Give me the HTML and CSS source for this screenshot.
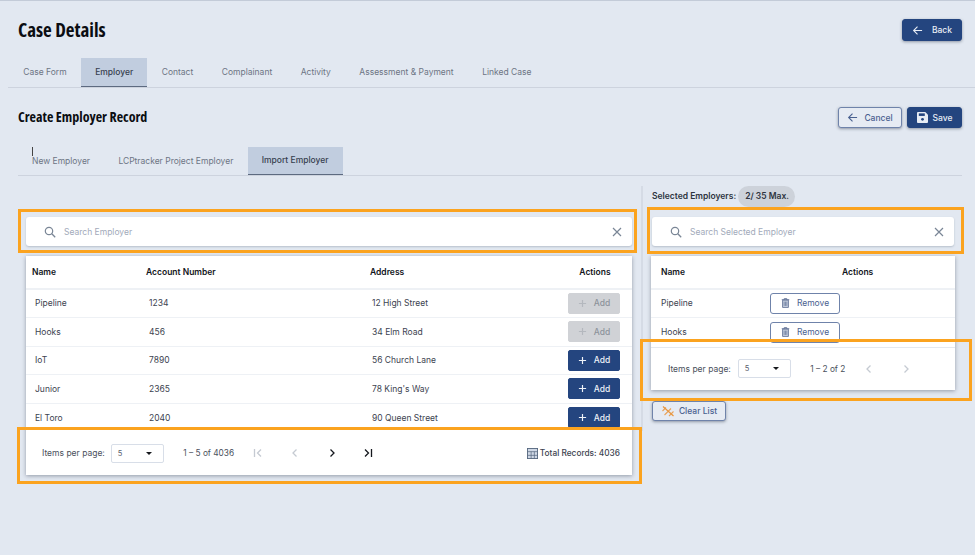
FILE: index.html
```html
<!DOCTYPE html>
<html lang="en">
<head>
<meta charset="utf-8">
<title>Case Details</title>
<link rel="stylesheet" href="styles.css">
</head>
<body>
<svg class="defs" width="0" height="0" aria-hidden="true">
  <symbol id="i-back" viewBox="0 0 12 12"><path d="M11 6H2M6 1.800 1.800 6 6 10.200" fill="none" stroke="currentColor" stroke-width="1.200"/></symbol>
  <symbol id="i-plus" viewBox="0 0 10 10"><path d="M5 1v8M1 5h8" fill="none" stroke="currentColor" stroke-width="1.300"/></symbol>
  <symbol id="i-search" viewBox="0 0 12 12"><circle cx="5" cy="5" r="3.700" fill="none" stroke="currentColor" stroke-width="1.200"/><path d="m7.800 7.800 3.400 3.400" stroke="currentColor" stroke-width="1.300"/></symbol>
  <symbol id="i-x" viewBox="0 0 10 10"><path d="m1 1 8 8M9 1 1 9" fill="none" stroke="currentColor" stroke-width="1.200"/></symbol>
  <symbol id="i-trash" viewBox="0 0 10 12"><path d="M.5 2h9M3.500 2V.7h3V2" fill="none" stroke="currentColor"/><path d="M1.500 2.600h7V11.300h-7z" fill="#c9d1e0" stroke="currentColor"/><path d="M3.400 4.300v5.200M5 4.300v5.200M6.600 4.300v5.200" stroke="currentColor" stroke-width=".8"/></symbol>
  <symbol id="i-prev" viewBox="0 0 8 10"><path d="M5.500 1.500 2 5l3.500 3.500" fill="none" stroke="currentColor" stroke-width="1.300"/></symbol>
  <symbol id="i-next" viewBox="0 0 8 10"><path d="M2.500 1.500 6 5 2.500 8.500" fill="none" stroke="currentColor" stroke-width="1.300"/></symbol>
  <symbol id="i-first" viewBox="0 0 10 10"><path d="M1.500 1v8M8 1.500 4.500 5 8 8.500" fill="none" stroke="currentColor" stroke-width="1.300"/></symbol>
  <symbol id="i-last" viewBox="0 0 10 10"><path d="M8.500 1v8M2 1.500 5.500 5 2 8.500" fill="none" stroke="currentColor" stroke-width="1.300"/></symbol>
</svg>

<header class="page-head">
  <h1 class="title">Case Details</h1>
  <button class="btn btn-solid btn-back"><svg class="ic-back"><use href="#i-back"/></svg>Back</button>
</header>

<nav class="tabs main-tabs">
  <a class="tab">Case Form</a>
  <a class="tab active">Employer</a>
  <a class="tab">Contact</a>
  <a class="tab">Complainant</a>
  <a class="tab">Activity</a>
  <a class="tab">Assessment &amp; Payment</a>
  <a class="tab">Linked Case</a>
</nav>

<section class="record-head">
  <h2 class="subtitle">Create Employer Record</h2>
  <div class="head-actions">
    <button class="btn btn-outline btn-cancel"><svg class="ic-back"><use href="#i-back"/></svg>Cancel</button>
    <button class="btn btn-solid btn-save">
      <svg class="ic-save" viewBox="0 0 12 12"><path d="M1 0h8l3 3v8a1 1 0 0 1-1 1H1a1 1 0 0 1-1-1V1a1 1 0 0 1 1-1z" fill="currentColor"/><rect x="2" y="1.500" width="6.500" height="2.800" fill="#24457f"/><circle cx="6" cy="8" r="1.500" fill="#24457f"/></svg>Save</button>
  </div>
</section>

<nav class="tabs sub-tabs">
  <span class="caret"></span>
  <a class="tab">New Employer</a>
  <a class="tab">LCPtracker Project Employer</a>
  <a class="tab active">Import Employer</a>
</nav>

<main class="columns">
  <section class="col-left">
    <div class="search">
      <svg class="ic-search"><use href="#i-search"/></svg>
      <span class="placeholder">Search Employer</span>
      <svg class="ic-x"><use href="#i-x"/></svg>
    </div>
    <div class="card">
      <div class="row row-l row-head"><span>Name</span><span>Account Number</span><span>Address</span><span class="act">Actions</span></div>
      <div class="row row-l"><span>Pipeline</span><span>1234</span><span>12 High Street</span><button class="btn-add off"><svg class="ic-plus"><use href="#i-plus"/></svg>Add</button></div>
      <div class="row row-l"><span>Hooks</span><span>456</span><span>34 Elm Road</span><button class="btn-add off"><svg class="ic-plus"><use href="#i-plus"/></svg>Add</button></div>
      <div class="row row-l"><span>IoT</span><span>7890</span><span>56 Church Lane</span><button class="btn-add"><svg class="ic-plus"><use href="#i-plus"/></svg>Add</button></div>
      <div class="row row-l"><span>Junior</span><span>2365</span><span>78 King's Way</span><button class="btn-add"><svg class="ic-plus"><use href="#i-plus"/></svg>Add</button></div>
      <div class="row row-l last"><span>El Toro</span><span>2040</span><span>90 Queen Street</span><button class="btn-add"><svg class="ic-plus"><use href="#i-plus"/></svg>Add</button></div>
      <div class="pager pager-l">
        <span class="pp-label">Items per page:</span>
        <span class="select"><span>5</span><i class="tri"></i></span>
        <span class="range">1 – 5 of 4036</span>
        <span class="nav-set">
          <svg class="pg dim"><use href="#i-first"/></svg>
          <svg class="pg dim"><use href="#i-prev"/></svg>
          <svg class="pg"><use href="#i-next"/></svg>
          <svg class="pg"><use href="#i-last"/></svg>
        </span>
        <span class="total">
          <svg class="ic-grid" viewBox="0 0 12 12"><rect x=".5" y=".5" width="11" height="11" fill="#cfd8e6" stroke="#56677f"/><path d="M.5 4h11M.5 8h11M4.500 4v7.500M8 4v7.500" stroke="#56677f" stroke-width=".8"/></svg>Total Records: 4036</span>
      </div>
    </div>
  </section>

  <aside class="col-right">
    <div class="sel-head"><span>Selected Employers:</span><span class="chip">2/ 35 Max.</span></div>
    <div class="search search-r">
      <svg class="ic-search"><use href="#i-search"/></svg>
      <span class="placeholder">Search Selected Employer</span>
      <svg class="ic-x"><use href="#i-x"/></svg>
    </div>
    <div class="card">
      <div class="row row-r row-head"><span>Name</span><span class="act-r">Actions</span></div>
      <div class="row row-r"><span>Pipeline</span><button class="btn-remove"><svg class="ic-trash"><use href="#i-trash"/></svg>Remove</button></div>
      <div class="row row-r last"><span>Hooks</span><button class="btn-remove"><svg class="ic-trash"><use href="#i-trash"/></svg>Remove</button></div>
      <div class="pager pager-r">
        <span class="pp-label">Items per page:</span>
        <span class="select"><span>5</span><i class="tri"></i></span>
        <span class="range">1 – 2 of 2</span>
        <span class="nav-set">
          <svg class="pg dim"><use href="#i-prev"/></svg>
          <svg class="pg dim"><use href="#i-next"/></svg>
        </span>
      </div>
    </div>
    <button class="btn btn-outline btn-clear">
      <svg class="ic-clear" viewBox="0 0 14 12"><path d="M1.500 6 5 2.500M3.500 10 10 3.500M8 11l4.500-4.500" stroke="#e8a25a" stroke-width="1.100" fill="none"/><path d="m2 1.500 10.500 9.500" stroke="#e8963e" stroke-width="1.200"/></svg>Clear List</button>
  </aside>
</main>

<div class="mark mark-a"></div>
<div class="mark mark-b"></div>
<div class="mark mark-c"></div>
<div class="mark mark-d"></div>
</body>
</html>
```
FILE: styles.css
```css
* { box-sizing: border-box; }
html, body { margin: 0; padding: 0; }
body {
  position: relative;
  width: 975px;
  height: 555px;
  overflow: hidden;
  background: #e2e8f1;
  border-top: 1px solid #c3cbd8;
  font-family: "Inter", "Liberation Sans", sans-serif;
  font-size: 8.5px;
  color: #3c4350;
}
.defs { position: absolute; }
svg { display: block; flex: none; }
button { font-family: inherit; cursor: pointer; }

.page-head {
  display: flex;
  align-items: center;
  justify-content: space-between;
  height: 57px;
  padding: 1px 13px 0 18px;
}
.title {
  margin: 0;
  font-family: "Open Sans", "Noto Sans", sans-serif;
  font-stretch: 75%;
  font-size: 19px;
  font-weight: 700;
  color: #0b0d12;
}
.btn {
  display: flex;
  align-items: center;
  justify-content: center;
  border-radius: 3px;
  font-size: 8.5px;
  font-weight: 500;
  box-shadow: 0 1px 3px rgba(40, 50, 70, .45);
}
.btn-solid { background: #24457f; border: 1px solid #24457f; color: #e8edf5; }
.btn-outline { background: #e6ebf3; border: 1px solid #6f83aa; color: #4a6190; }
.btn-back { width: 60px; height: 22px; gap: 9px; }
.ic-back { width: 11px; height: 11px; }

.tabs { display: flex; border-bottom: 1px solid #cdd3de; color: #6d7584; font-size: 8.5px; }
.tab { display: flex; align-items: center; height: 100%; padding-bottom: 1px; }
.tab.active {
  background: #c1cddf;
  border-bottom: 1px solid #5d6a80;
  color: #37404f;
  font-weight: 500;
}
.main-tabs { height: 30px; margin-left: 8px; padding-left: 1px; }
.main-tabs .tab { padding: 0 14.25px 1px; }
.record-head {
  display: flex;
  align-items: center;
  justify-content: space-between;
  height: 59px;
  padding: 0 13px 0 18px;
}
.subtitle {
  margin: 0 0 3px;
  font-family: "Open Sans", "Noto Sans", sans-serif;
  font-stretch: 75%;
  font-size: 14px;
  font-weight: 700;
  color: #0b0d12;
}
.head-actions { display: flex; gap: 5px; }
.btn-cancel { width: 64px; height: 21px; gap: 6px; }
.btn-save { width: 55px; height: 21px; gap: 5px; }
.ic-save { width: 11px; height: 11px; }

.sub-tabs { position: relative; height: 29px; margin: 0 13px 0 18px; }
.sub-tabs .tab { padding: 0 14.3px 1px 14px; }
.caret { position: absolute; left: 14px; top: 0; width: 1px; height: 9px; background: #444; }

.columns { display: flex; }
.col-left { width: 606px; margin: 41px 0 0 26px; }
.col-right {
  width: 314px;
  height: 245px;
  margin: 10px 0 0 9px;
  padding-left: 8px;
  border-left: 2px solid #d5dbe5;
}
.search {
  display: flex;
  align-items: center;
  height: 29px;
  padding: 0 10px 0 18px;
  background: #fff;
  border-radius: 3px;
  box-shadow: 0 1px 2px rgba(60, 75, 100, .25);
  margin-bottom: 10px;
}
.ic-search { width: 12px; height: 12px; color: #7a8696; margin-right: 8px; }
.placeholder { flex: 1; color: #a2aaba; font-size: 8.5px; }
.ic-x { width: 10px; height: 10px; color: #7a8696; }

.card {
  background: #fff;
  box-shadow: 0 1px 4px rgba(50, 60, 80, .45);
}
.row {
  display: grid;
  align-items: center;
  height: 28.5px;
  border-bottom: 1px solid #eef1f5;
  padding-left: 9px;
  color: #3c4350;
}
.row-l { grid-template-columns: 114px 223px 196px 52px; }
.row-r { grid-template-columns: 109px 70px; padding-left: 10px; }
.row-head {
  height: 33.5px;
  padding-left: 6px;
  border-bottom-width: 2px;
  font-weight: 600;
  color: #12151b;
}
.row-l.row-head { grid-template-columns: 114px 224px 196px 58px; }
.row-r.row-head { grid-template-columns: 181px 70px; padding-left: 10px; }
.row.last { border-bottom: 0; }
.act { text-align: center; }
.btn-add {
  display: flex;
  align-items: center;
  justify-content: center;
  gap: 7px;
  height: 21px;
  padding: 0;
  border: 1px solid #24457f;
  border-radius: 2px;
  background: #24457f;
  color: #eef2f8;
  font-size: 8.5px;
  font-weight: 500;
}
.btn-add.off { background: #d0d2d6; border-color: #d0d2d6; color: #8d929b; }
.ic-plus { width: 9px; height: 9px; }
.btn-add.off .ic-plus { color: #b4b8be; }
.btn-remove {
  display: flex;
  align-items: center;
  justify-content: center;
  gap: 7px;
  height: 21px;
  padding: 0;
  background: #fff;
  border: 1px solid #6f83aa;
  border-radius: 3px;
  color: #4a6190;
  font-size: 8.5px;
}
.ic-trash { width: 9px; height: 10px; color: #5a6c92; }

.pager { display: flex; align-items: center; }
.pager-l { height: 43px; padding: 0 12px 1px 16px; }
.pager-r { height: 43px; padding: 0 17px; border-top: 1px solid #e4e8ee; }
.pp-label { margin-right: 7px; color: #4a505c; }
.pager-l .pp-label { margin-right: 6px; }
.select {
  display: flex;
  align-items: center;
  justify-content: space-between;
  width: 53px;
  height: 19px;
  padding: 0 11px 0 6px;
  border: 1px solid #d8dee8;
  border-radius: 2px;
  color: #5a606c;
  font-size: 7.5px;
}
.tri { width: 0; height: 0; border: 3px solid transparent; border-top: 3px solid #16181d; border-bottom: 0; }
.range { margin-left: 19.5px; color: #4a505c; font-size: 8.3px; }
.nav-set { display: flex; margin-left: 19px; gap: 26.7px; color: #15181e; }
.pg { width: 10px; height: 10px; }
.pg.dim { color: #c5cad2; }
.total { display: flex; align-items: center; gap: 2px; margin-left: auto; font-size: 8.3px; font-weight: 500; color: #3c4350; }
.ic-grid { width: 11px; height: 11px; }

.sel-head { display: flex; align-items: center; height: 21px; padding: 0 0 1px 1px; font-weight: 600; color: #2d3440; }
.chip {
  display: flex;
  align-items: center;
  height: 21px;
  margin-left: 2px;
  padding: 0 6px 1px 7px;
  border-radius: 11px;
  background: #cdd2da;
}
.search-r { margin: 10px 0 10px 1px; width: 302px; }
.col-right .card { width: 304px; }
.btn-clear { width: 74px; height: 20px; gap: 4px; margin: 11px 0 0 1px; }
.ic-clear { width: 14px; height: 12px; }

.mark { position: absolute; border: 3px solid #fba31f; pointer-events: none; }
.mark-a { left: 18px; top: 208px; width: 619px; height: 44px; }
.mark-b { left: 17px; top: 426px; width: 625px; height: 57px; }
.mark-c { left: 647px; top: 206px; width: 317px; height: 47px; }
.mark-d { left: 640px; top: 338px; width: 332px; height: 62px; }
```
